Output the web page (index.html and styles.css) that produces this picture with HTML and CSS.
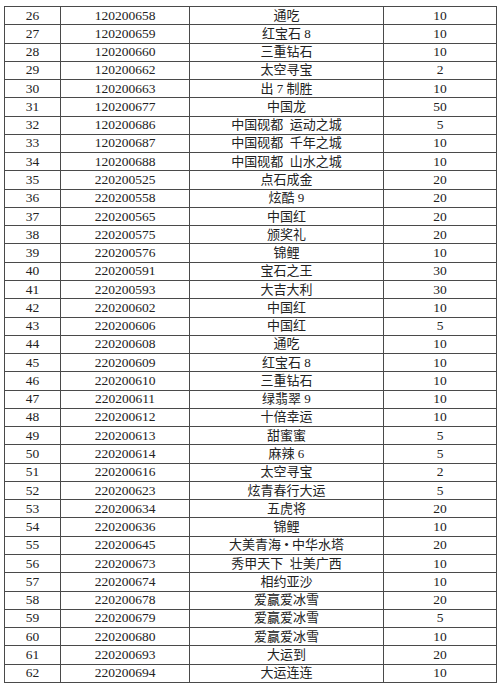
FILE: index.html
```html
<!DOCTYPE html>
<html lang="zh">
<head>
<meta charset="utf-8">
<title>table</title>
<link rel="stylesheet" href="styles.css">
</head>
<body>
<table class="grid">
<colgroup><col class="c1"><col class="c2"><col class="c3"><col class="c4"></colgroup>
<tbody>
<tr><td>26</td><td>120200658</td><td>通吃</td><td>10</td></tr>
<tr><td>27</td><td>120200659</td><td>红宝石 8</td><td>10</td></tr>
<tr><td>28</td><td>120200660</td><td>三重钻石</td><td>10</td></tr>
<tr><td>29</td><td>120200662</td><td>太空寻宝</td><td>2</td></tr>
<tr><td>30</td><td>120200663</td><td>出 7 制胜</td><td>10</td></tr>
<tr><td>31</td><td>120200677</td><td>中国龙</td><td>50</td></tr>
<tr><td>32</td><td>120200686</td><td>中国砚都&nbsp;&nbsp;运动之城</td><td>5</td></tr>
<tr><td>33</td><td>120200687</td><td>中国砚都&nbsp;&nbsp;千年之城</td><td>10</td></tr>
<tr><td>34</td><td>120200688</td><td>中国砚都&nbsp;&nbsp;山水之城</td><td>10</td></tr>
<tr><td>35</td><td>220200525</td><td>点石成金</td><td>20</td></tr>
<tr><td>36</td><td>220200558</td><td>炫酷 9</td><td>20</td></tr>
<tr><td>37</td><td>220200565</td><td>中国红</td><td>20</td></tr>
<tr><td>38</td><td>220200575</td><td>颁奖礼</td><td>20</td></tr>
<tr><td>39</td><td>220200576</td><td>锦鲤</td><td>10</td></tr>
<tr><td>40</td><td>220200591</td><td>宝石之王</td><td>30</td></tr>
<tr><td>41</td><td>220200593</td><td>大吉大利</td><td>30</td></tr>
<tr><td>42</td><td>220200602</td><td>中国红</td><td>10</td></tr>
<tr><td>43</td><td>220200606</td><td>中国红</td><td>5</td></tr>
<tr><td>44</td><td>220200608</td><td>通吃</td><td>10</td></tr>
<tr><td>45</td><td>220200609</td><td>红宝石 8</td><td>10</td></tr>
<tr><td>46</td><td>220200610</td><td>三重钻石</td><td>10</td></tr>
<tr><td>47</td><td>220200611</td><td>绿翡翠 9</td><td>10</td></tr>
<tr><td>48</td><td>220200612</td><td>十倍幸运</td><td>10</td></tr>
<tr><td>49</td><td>220200613</td><td>甜蜜蜜</td><td>5</td></tr>
<tr><td>50</td><td>220200614</td><td>麻辣 6</td><td>5</td></tr>
<tr><td>51</td><td>220200616</td><td>太空寻宝</td><td>2</td></tr>
<tr><td>52</td><td>220200623</td><td>炫青春行大运</td><td>5</td></tr>
<tr><td>53</td><td>220200634</td><td>五虎将</td><td>20</td></tr>
<tr><td>54</td><td>220200636</td><td>锦鲤</td><td>10</td></tr>
<tr><td>55</td><td>220200645</td><td>大美青海 • 中华水塔</td><td>20</td></tr>
<tr><td>56</td><td>220200673</td><td>秀甲天下&nbsp;&nbsp;壮美广西</td><td>10</td></tr>
<tr><td>57</td><td>220200674</td><td>相约亚沙</td><td>10</td></tr>
<tr><td>58</td><td>220200678</td><td>爱赢爱冰雪</td><td>20</td></tr>
<tr><td>59</td><td>220200679</td><td>爱赢爱冰雪</td><td>5</td></tr>
<tr><td>60</td><td>220200680</td><td>爱赢爱冰雪</td><td>10</td></tr>
<tr><td>61</td><td>220200693</td><td>大运到</td><td>20</td></tr>
<tr><td>62</td><td>220200694</td><td>大运连连</td><td>10</td></tr>
</tbody>
</table>
</body>
</html>
```
FILE: styles.css
```css
html, body {
  margin: 0;
  padding: 0;
  background: #ffffff;
}
body {
  padding: 6px 0 0 4px;
  font-family: "Liberation Serif", "Noto Sans CJK SC", serif;
  font-size: 13.5px;
  color: #222222;
}
.grid {
  border-collapse: collapse;
  table-layout: fixed;
  width: 492px;
}
.c1 { width: 56px; }
.c2 { width: 129px; }
.c3 { width: 194px; }
.c4 { width: 113px; }
.grid td {
  border: 1px solid #4a4a4a;
  height: 17.27px;
  padding: 0;
  text-align: center;
  line-height: 16px;
  white-space: nowrap;
  overflow: hidden;
}
.grid td:nth-child(3) {
  font-size: 13px;
}
```
